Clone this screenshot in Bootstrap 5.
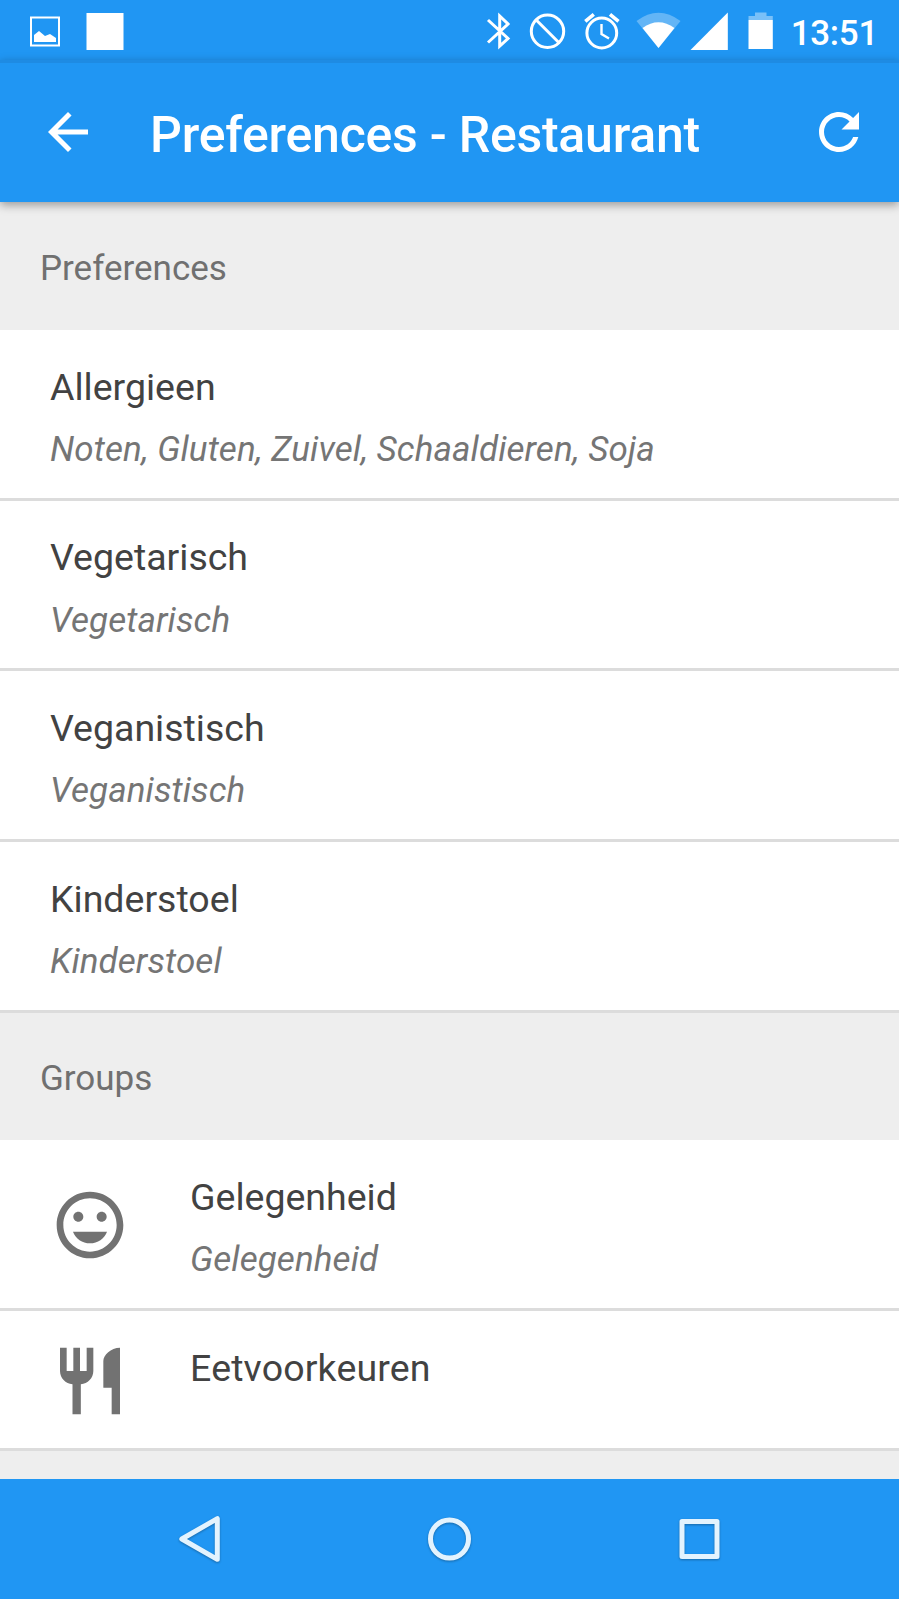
<!DOCTYPE html>
<html lang="nl">
<head>
<meta charset="utf-8">
<meta name="viewport" content="width=device-width, initial-scale=1">
<title>Preferences - Restaurant</title>
<link href="https://cdn.jsdelivr.net/npm/bootstrap@5.3.0/dist/css/bootstrap.min.css" rel="stylesheet">
<style>
  :root { --app-blue: #2096f3; }
  body { font-family: Roboto, "Liberation Sans", sans-serif; background: #eee; height: 1599px; overflow: hidden; }
  svg { display: block; flex: none; }
  .status-bar { height: 60px; background: var(--app-blue); }
  .clock { width: 117.5px; font-size: 35px; font-weight: 500; letter-spacing: -.3px; line-height: 42px; padding: 13px 21px 0 0; white-space: nowrap; }
  .app-bar { height: 142px; background: var(--app-blue); border-top: 3px solid #1e8be3; box-shadow: 0 3px 9px rgba(0,0,0,.36); z-index: 2; padding: 0 30px 1px 38px; }
  .app-title { font-size: 50px; font-weight: 500; letter-spacing: -.24px; line-height: 60px; margin: 5px 0 0 52px; }
  .section-head { height: 127.6px; padding: 5px 40px 0; font-size: 35px; color: #707070; }
  .section-first { height: 128px; padding-top: 6px; }
  .list-group-flush > .list-group-item.pref-row { height: 170.7px; border: 0 solid #dcdcdc; border-bottom-width: 3px; padding: 34.6px 50px 0; }
  .pref-title { font-size: 37.5px; line-height: 44px; color: #424242; }
  .pref-sub { font-size: 35px; letter-spacing: .085px; line-height: 42px; margin-top: 20.3px; color: #757575; font-style: italic; }
  .icon-col { width: 140px; flex: none; }
  .icon-col svg { margin-top: 10px; fill: #727272; }
  .list-group-flush > .list-group-item.row-short { height: 140px; }
  .row-short .icon-col svg { margin-top: -5px; }
  .row-short .pref-title { letter-spacing: .16px; }
  .nav-bar { height: 120px; background: var(--app-blue); }
</style>
</head>
<body class="d-flex flex-column">
  <div class="status-bar d-flex justify-content-between text-white flex-shrink-0">
    <svg width="140" height="60" fill="#fff">
      <rect x="31" y="17.500" width="28" height="28" fill="none" stroke="#fff" stroke-width="2"/>
      <path d="M34 42V35l5-4 6 5 5-2 6 4V42z"/>
      <rect x="86.500" y="13" width="37" height="37"/>
    </svg>
    <div class="d-flex">
      <svg width="310" height="60" fill="none" stroke="#fff">
        <path d="M16 20 36 38.500 27.700 46V16L36 24 16 42.500" stroke-width="3"/>
        <circle cx="75.500" cy="31.300" r="16.200" stroke-width="3"/><path d="M64 19.800 87 42.800" stroke-width="3"/>
        <circle cx="129.800" cy="33" r="14.900" stroke-width="3"/>
        <path d="M129.500 24v10l7.500 4.500" stroke-width="2.400"/>
        <path d="M113.300 21.300l8.500-7M146.500 21.300l-8.500-7" stroke-width="3.600"/>
        <g stroke="none" fill="#fff">
          <path d="M164.500 21Q186.500 4.500 208.500 21L186.500 48z" opacity=".3"/>
          <path d="M170.500 28Q186.500 16.500 202.500 28L186.500 48z"/>
          <path d="M218.500 50 255.800 12.500V50z"/>
          <path d="M276.500 20v-4h6.500v-3.500h11.500V16h6.300v4z" opacity=".4"/>
          <path d="M276.500 20h24.300v29H276.500z"/>
        </g>
      </svg>
      <div class="clock text-end">13:51</div>
    </div>
  </div>

  <header class="app-bar d-flex align-items-center text-white position-relative flex-shrink-0">
    <svg width="60" height="60" viewBox="0 0 24 24" fill="#fff"><path d="M20 11H7.830l5.590-5.590L12 4l-8 8 8 8 1.410-1.410L7.830 13H20v-2z"/></svg>
    <h1 class="app-title">Preferences - Restaurant</h1>
    <svg class="ms-auto" width="60" height="60" viewBox="0 0 24 24" fill="#fff"><path d="M17.650 6.350C16.200 4.900 14.210 4 12 4c-4.420 0-7.990 3.580-7.990 8s3.570 8 7.990 8c3.730 0 6.840-2.550 7.730-6h-2.080c-.82 2.330-3.040 4-5.650 4-3.310 0-6-2.690-6-6s2.690-6 6-6c1.660 0 3.140.69 4.220 1.780L13 11h7V4l-2.350 2.350z"/></svg>
  </header>

  <main class="flex-grow-1 overflow-hidden">
    <div class="section-head section-first d-flex align-items-center">Preferences</div>
    <div class="list-group list-group-flush">
      <div class="list-group-item pref-row"><div class="pref-title">Allergieen</div><div class="pref-sub">Noten, Gluten, Zuivel, Schaaldieren, Soja</div></div>
      <div class="list-group-item pref-row"><div class="pref-title">Vegetarisch</div><div class="pref-sub">Vegetarisch</div></div>
      <div class="list-group-item pref-row"><div class="pref-title">Veganistisch</div><div class="pref-sub">Veganistisch</div></div>
      <div class="list-group-item pref-row"><div class="pref-title">Kinderstoel</div><div class="pref-sub">Kinderstoel</div></div>
    </div>
    <div class="section-head d-flex align-items-center">Groups</div>
    <div class="list-group list-group-flush">
      <div class="list-group-item pref-row d-flex">
        <div class="icon-col"><svg width="80" height="80" viewBox="0 0 24 24"><path d="M11.990 2C6.470 2 2 6.480 2 12s4.470 10 9.990 10C17.520 22 22 17.520 22 12S17.520 2 11.990 2zM12 20c-4.420 0-8-3.580-8-8s3.580-8 8-8 8 3.580 8 8-3.580 8-8 8zm3.500-9c.83 0 1.500-.67 1.500-1.500S16.330 8 15.500 8 14 8.670 14 9.500s.67 1.500 1.500 1.500zm-7 0c.83 0 1.500-.67 1.500-1.500S9.330 8 8.500 8 7 8.670 7 9.500 7.670 11 8.500 11zm3.500 6.500c2.330 0 4.310-1.460 5.110-3.500H6.890c.8 2.040 2.780 3.500 5.110 3.500z"/></svg></div>
        <div><div class="pref-title">Gelegenheid</div><div class="pref-sub">Gelegenheid</div></div>
      </div>
      <div class="list-group-item pref-row row-short d-flex">
        <div class="icon-col"><svg width="80" height="80" viewBox="0 0 24 24"><path d="M11 9H9V2H7v7H5V2H3v7c0 2.120 1.660 3.840 3.750 3.970V22h2.500v-9.030C11.340 12.840 13 11.120 13 9V2h-2v7zm5-3v8h2.500v8H21V2c-2.760 0-5 2.240-5 4z"/></svg></div>
        <div class="pref-title">Eetvoorkeuren</div>
      </div>
    </div>
  </main>

  <nav class="nav-bar flex-shrink-0">
    <svg width="899" height="120" fill="none" stroke="#e3f3fe" stroke-width="5" stroke-linejoin="round">
      <g style="filter:drop-shadow(0 1px 1px rgba(0,0,0,.3))">
        <path d="M181.800 60 217.300 39.700V80.300z"/>
        <circle cx="449.500" cy="60" r="19"/>
        <rect x="682" y="42.500" width="35" height="35"/>
      </g>
    </svg>
  </nav>
  <script src="https://cdn.jsdelivr.net/npm/bootstrap@5.3.0/dist/js/bootstrap.bundle.min.js"></script>
</body>
</html>
